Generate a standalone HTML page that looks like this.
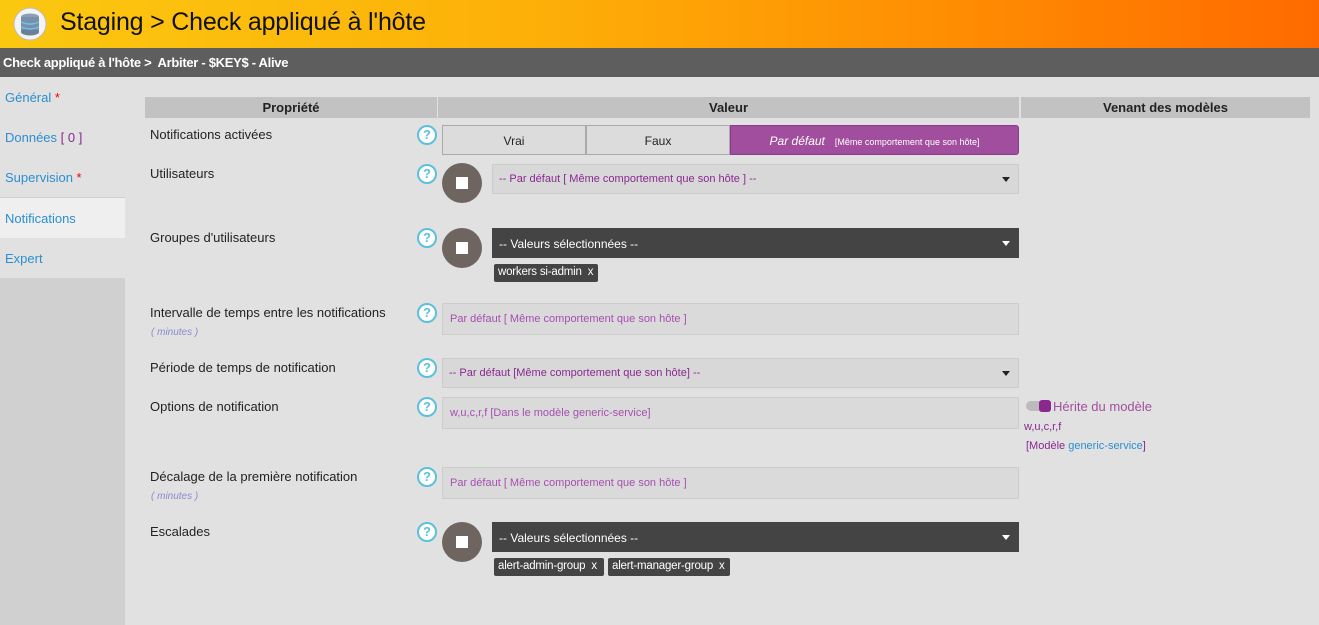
<!DOCTYPE html>
<html><head><meta charset="utf-8"><style>
*{margin:0;padding:0;box-sizing:border-box}
body{width:1319px;height:625px;overflow:hidden;background:#e1e1e1;font-family:"Liberation Sans",sans-serif;position:relative;font-size:13px;color:#222}
.a{position:absolute}
#top{left:0;top:0;width:1319px;height:48px;background:linear-gradient(90deg,#fbc810 0%,#fdb008 40%,#ff8a02 75%,#ff6a00 100%)}
#top h1{position:absolute;left:60px;top:8px;font-weight:normal;font-size:25px;color:#111;letter-spacing:-0.2px}
#bc{left:0;top:48px;width:1319px;height:29px;background:#5e5e5e;color:#fff;font-size:13px;padding:7px 3px;letter-spacing:-0.3px;font-weight:bold}
#side{left:0;top:77px;width:125px;height:548px;background:#d0d0d0}
.si{position:absolute;left:0;width:125px;height:40px;background:#e1e1e1;color:#2a8fd0;font-size:13px;padding:13px 5px}
.si b{color:#e00;font-weight:normal}
.th{top:97px;height:21px;background:#c2c2c2;font-weight:bold;text-align:center;font-size:13px;padding-top:3px;color:#222}
.lbl{left:150px;font-size:13px;color:#222}
.min{left:151px;font-size:10px;font-style:italic;color:#8a8ad0}
.q{width:20px;height:20px;border-radius:50%;border:2px solid #5bc0de;background:#fff;color:#5bc0de;font-size:13px;font-weight:bold;text-align:center;line-height:16px;left:417px}
.circ{left:442px;width:40px;height:40px;border-radius:50%;background:#6e6560}
.circ:after{content:"";position:absolute;left:14px;top:14px;width:12px;height:12px;background:#fff}
.inp{left:442px;width:577px;height:32px;background:#dadada;border:1px solid #ccc;color:#a64fb0;font-size:11px;padding:9px 7px}
.sel{left:492px;width:527px;height:30px;background:#d8d8d8;border:1px solid #ccc;color:#8a2890;font-size:11px;padding:8px 6px}
.sel:after{content:"";position:absolute right:8px;top:12px}
.sel:after{content:"";position:absolute;right:8px;top:12px;border:4px solid transparent;border-top:5px solid #222}
.dark{background:#444;color:#fff;border-color:#444;font-size:12px}
.dark:after{border-top-color:#fff}
.tag{height:18px;background:#444;color:#fff;font-size:11.5px;padding:2px 4px;border-radius:2px;white-space:nowrap;letter-spacing:-0.2px}
.btn{top:125px;height:30px;border:1px solid #aaa;background:#dcdcdc;text-align:center;font-size:12px;padding-top:8px}
</style></head><body>
<div id="top" class="a">
<svg class="a" style="left:13px;top:7px" width="34" height="34"><circle cx="17" cy="17" r="16" fill="#f4f4f4" stroke="#bbb"/><ellipse cx="17" cy="10" rx="9" ry="3.5" fill="#8aa0b8"/><rect x="8" y="10" width="18" height="15" fill="#7a90aa"/><ellipse cx="17" cy="25" rx="9" ry="3.5" fill="#6a8098"/><path d="M8 15q9 4 18 0M8 20q9 4 18 0" stroke="#6fc3f0" fill="none" stroke-width="1.5"/></svg>
<h1>Staging &gt; Check appliqué à l'hôte</h1></div>
<div id="bc" class="a">Check appliqué à l'hôte &gt;&nbsp; Arbiter - $KEY$ - Alive</div>
<div id="side" class="a">
<div class="si" style="top:0">Général <b>*</b></div>
<div class="si" style="top:40px">Données <span style="color:#8a2890">[ 0 ]</span></div>
<div class="si" style="top:80px">Supervision <b>*</b></div>
<div class="si" style="top:121px;background:#efefef">Notifications</div>
<div class="si" style="top:161px">Expert</div>
</div>
<div class="a th" style="left:145px;width:292px">Propriété</div>
<div class="a th" style="left:438px;width:581px">Valeur</div>
<div class="a th" style="left:1021px;width:289px">Venant des modèles</div>

<div class="a lbl" style="top:127px">Notifications activées</div>
<div class="a q" style="top:125px">?</div>
<div class="a btn" style="left:442px;width:144px">Vrai</div>
<div class="a btn" style="left:586px;width:144px">Faux</div>
<div class="a btn" style="left:730px;width:289px;background:#a24e9e;border-color:#8a3a88;color:#fff;border-radius:0 3px 3px 0"><i>Par défaut</i>&nbsp;&nbsp; <span style="font-size:9px">[Même comportement que son hôte]</span></div>

<div class="a lbl" style="top:166px">Utilisateurs</div>
<div class="a q" style="top:164px">?</div>
<div class="a circ" style="top:163px"></div>
<div class="a sel" style="top:164px">-- Par défaut [ Même comportement que son hôte ] --</div>

<div class="a lbl" style="top:230px">Groupes d'utilisateurs</div>
<div class="a q" style="top:228px">?</div>
<div class="a circ" style="top:228px"></div>
<div class="a sel dark" style="top:228px">-- Valeurs sélectionnées --</div>
<div class="a tag" style="left:494px;top:264px;width:104px">workers si-admin &nbsp;x</div>

<div class="a lbl" style="top:305px">Intervalle de temps entre les notifications</div>
<div class="a min" style="top:327px">( minutes )</div>
<div class="a q" style="top:303px">?</div>
<div class="a inp" style="top:303px">Par défaut [ Même comportement que son hôte ]</div>

<div class="a lbl" style="top:360px">Période de temps de notification</div>
<div class="a q" style="top:358px">?</div>
<div class="a sel" style="left:442px;width:577px;top:358px">-- Par défaut [Même comportement que son hôte] --</div>

<div class="a lbl" style="top:399px">Options de notification</div>
<div class="a q" style="top:397px">?</div>
<div class="a inp" style="top:397px">w,u,c,r,f [Dans le modèle generic-service]</div>
<div class="a" style="left:1026px;top:401px;width:24px;height:10px;border-radius:5px;background:#bbb"></div>
<div class="a" style="left:1039px;top:400px;width:12px;height:12px;border-radius:3px;background:#8a2890"></div>
<div class="a" style="left:1053px;top:399px;font-size:13px;color:#a24e9e">Hérite du modèle</div>
<div class="a" style="left:1024px;top:421px;font-size:11px;color:#8a2890">w,u,c,r,f</div>
<div class="a" style="left:1026px;top:440px;font-size:11px;color:#8a2890">[Modèle <span style="color:#2a8fd0">generic-service</span>]</div>

<div class="a lbl" style="top:469px">Décalage de la première notification</div>
<div class="a min" style="top:491px">( minutes )</div>
<div class="a q" style="top:467px">?</div>
<div class="a inp" style="top:467px">Par défaut [ Même comportement que son hôte ]</div>

<div class="a lbl" style="top:524px">Escalades</div>
<div class="a q" style="top:522px">?</div>
<div class="a circ" style="top:522px"></div>
<div class="a sel dark" style="top:522px">-- Valeurs sélectionnées --</div>
<div class="a tag" style="left:494px;top:558px;width:110px">alert-admin-group &nbsp;x</div>
<div class="a tag" style="left:608px;top:558px;width:122px">alert-manager-group &nbsp;x</div>
</body></html>
